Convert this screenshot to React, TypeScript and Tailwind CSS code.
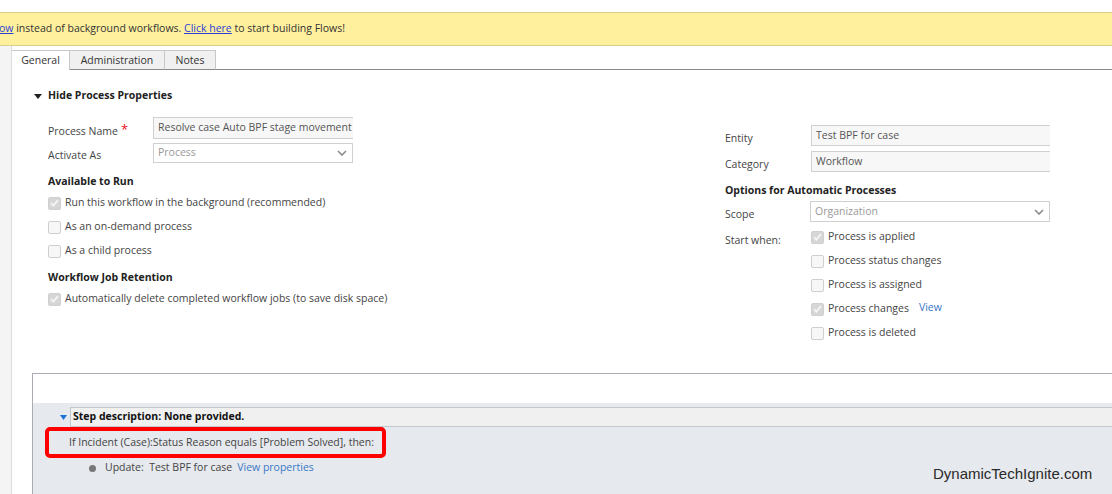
import { ReactNode } from "react";

const Check = ({ checked }: { checked?: boolean }) => (
  <span
    className={
      "flex h-[13px] w-[13px] shrink-0 items-center justify-center rounded-[2px] border " +
      (checked ? "border-[#cfcfcf] bg-[#d6d6d6]" : "border-[#cfcfcf] bg-[#f7f7f7]")
    }
  >
    {checked && (
      <svg width="9" height="8" viewBox="0 0 9 8">
        <path d="M1 4.2 L3.4 6.6 L8 1.2" fill="none" stroke="#f4f4f4" strokeWidth="1.8" />
      </svg>
    )}
  </span>
);

const CheckRow = ({ checked, children }: { checked?: boolean; children: ReactNode }) => (
  <div className="flex h-[24px] items-center gap-[4px]">
    <Check checked={checked} />
    <span className="text-[#444]">{children}</span>
  </div>
);

const Chevron = () => (
  <svg width="10" height="6" viewBox="0 0 10 6">
    <path d="M1 1 L5 5 L9 1" fill="none" stroke="#8a8a8a" strokeWidth="1.6" />
  </svg>
);

const Heading = ({ children }: { children: ReactNode }) => (
  <div className="h-[16px] leading-[16px] font-bold text-[#222]">{children}</div>
);

const App = () => {
  return (
    <div className="relative h-[494px] w-[1112px] overflow-hidden bg-white font-['Open_Sans',sans-serif] text-[10.5px] text-[#444]">
      <div className="h-[12px]" />
      <div className="flex h-[34px] items-center whitespace-nowrap border-y border-[#d8d08a] bg-[#fff09e] text-[#333]">
        <span className="-ml-[1px] text-[#2b3fd6] underline">ow</span>
        <span>&nbsp;instead of background workflows.&nbsp;</span>
        <span className="text-[#2b3fd6] underline">Click here</span>
        <span>&nbsp;to start building Flows!</span>
      </div>

      <div className="flex h-[448px]">
        <div className="w-[12px] shrink-0 border-r border-[#dcdcdc] bg-[#f4f4f4]" />
        <div className="flex min-w-0 flex-1 flex-col">
          {/* tabs */}
          <div className="mt-[4px] flex h-[20px] shrink-0 leading-[15px]">
            <div className="flex h-[20px] w-[58px] items-center justify-center border-t border-r border-[#c8c8c8] bg-white text-[#333]">
              General
            </div>
            <div className="flex h-[20px] w-[95px] items-center justify-center border-t border-r border-b border-[#c8c8c8] border-b-[#8a8a8a] bg-[#f0f0f0] text-[#333]">
              Administration
            </div>
            <div className="flex h-[20px] w-[51px] items-center justify-center border-t border-r border-b border-[#c8c8c8] border-b-[#8a8a8a] bg-[#f0f0f0] text-[#333]">
              Notes
            </div>
            <div className="h-[20px] flex-1 border-b border-[#8a8a8a]" />
          </div>

          <div className="pl-[20px]">
            {/* header */}
            <div className="mt-[18px] flex h-[16px] items-center">
              <svg width="8" height="5" viewBox="0 0 8 5" className="ml-[2px]">
                <path d="M0 0 L8 0 L4 5 Z" fill="#222" />
              </svg>
              <span className="ml-[6px] font-bold text-[#222]">Hide Process Properties</span>
            </div>

            <div className="flex items-start">
              {/* left column */}
              <div className="w-[693px] shrink-0 pl-[16px] pt-[13px]">
                <div className="flex items-end">
                  <div className="flex w-[105px] items-start leading-[15px]">
                    Process Name
                    <span className="ml-[3px] -mt-[2px] text-[13px] leading-[15px] text-[#e8101a]">*</span>
                  </div>
                  <div className="flex h-[22px] w-[200px] items-center overflow-hidden whitespace-nowrap border-y border-l border-[#d0d0d0] bg-[#f7f7f7] pl-[4px] text-[#555]">
                    Resolve case Auto BPF stage movement
                  </div>
                </div>
                <div className="mt-[4px] flex items-end">
                  <div className="w-[105px] leading-[15px]">Activate As</div>
                  <div className="flex h-[20px] w-[200px] items-center justify-between border border-[#d0d0d0] bg-white pl-[4px] pr-[5px] text-[#999]">
                    <span>Process</span>
                    <Chevron />
                  </div>
                </div>
                <div className="mt-[10px]">
                  <Heading>Available to Run</Heading>
                </div>
                <div className="mt-[2px]">
                  <CheckRow checked>Run this workflow in the background (recommended)</CheckRow>
                  <CheckRow>As an on-demand process</CheckRow>
                  <CheckRow>As a child process</CheckRow>
                </div>
                <div className="mt-[6px]">
                  <Heading>Workflow Job Retention</Heading>
                </div>
                <div className="mt-[2px]">
                  <CheckRow checked>Automatically delete completed workflow jobs (to save disk space)</CheckRow>
                </div>
              </div>

              {/* right column */}
              <div className="min-w-0 flex-1 pt-[21px]">
                <div className="flex items-end">
                  <div className="w-[86px] leading-[15px]">Entity</div>
                  <div className="flex h-[21px] w-[239px] items-center border-y border-l border-[#d0d0d0] bg-[#f7f7f7] pl-[4px] text-[#555]">
                    Test BPF for case
                  </div>
                </div>
                <div className="mt-[5px] flex items-end">
                  <div className="w-[86px] leading-[15px]">Category</div>
                  <div className="flex h-[21px] w-[239px] items-center border-y border-l border-[#d0d0d0] bg-[#f7f7f7] pl-[4px] text-[#555]">
                    Workflow
                  </div>
                </div>
                <div className="mt-[10px]">
                  <Heading>Options for Automatic Processes</Heading>
                </div>
                <div className="mt-[3px] flex items-end">
                  <div className="w-[85px] leading-[15px]">Scope</div>
                  <div className="flex h-[21px] w-[240px] items-center justify-between border border-[#d0d0d0] bg-white pl-[4px] pr-[5px] text-[#999]">
                    <span>Organization</span>
                    <Chevron />
                  </div>
                </div>
                <div className="mt-[3px] flex">
                  <div className="w-[86px] pt-[8px] leading-[15px]">Start when:</div>
                  <div className="flex flex-col">
                    <CheckRow checked>Process is applied</CheckRow>
                    <CheckRow>Process status changes</CheckRow>
                    <CheckRow>Process is assigned</CheckRow>
                    <div className="flex h-[24px] items-center">
                      <CheckRow checked>Process changes</CheckRow>
                      <span className="-mt-[3px] ml-[10px] text-[#3a78c8]">View</span>
                    </div>
                    <CheckRow>Process is deleted</CheckRow>
                  </div>
                </div>
              </div>
            </div>

            {/* step box */}
            <div className="mt-[28px] h-[200px] border-t border-l border-[#a9adb3]">
              <div className="h-[29px] bg-white" />
              <div className="h-[200px] bg-[#e6e9ed] pt-[4px]">
                <div className="flex h-[20px] items-center">
                  <svg width="7" height="5" viewBox="0 0 7 5" className="ml-[27px]">
                    <path d="M0 0 L7 0 L3.5 5 Z" fill="#1e6fd6" />
                  </svg>
                  <div className="ml-[3px] flex h-[20px] flex-1 items-center border-y border-l border-[#c3c7ce] bg-[#f0f0f0] pl-[2px] font-bold text-[#111]">
                    Step description: None provided.
                  </div>
                </div>
                <div className="ml-[12px] flex h-[31px] w-[341px] items-center rounded-[5px] border-[4px] border-[#ff0000] pl-[20px] text-[#444]">
                  If Incident (Case):Status Reason equals [Problem Solved], then:
                </div>
                <div className="mt-[2px] flex h-[16px] items-center pl-[56px]">
                  <span className="h-[7px] w-[7px] rounded-full bg-[#777]" />
                  <span className="ml-[9px] text-[#444]">Update:&nbsp; Test BPF for case</span>
                  <span className="ml-[5px] text-[#3a78c8]">View properties</span>
                </div>
              </div>
            </div>
          </div>
        </div>
      </div>

      <div className="absolute left-[933px] top-[464px] font-['Liberation_Sans',Arial,sans-serif] text-[15px] leading-[20px] text-[#2a2a2a]">
        DynamicTechIgnite.com
      </div>
    </div>
  );
};

export default App;
